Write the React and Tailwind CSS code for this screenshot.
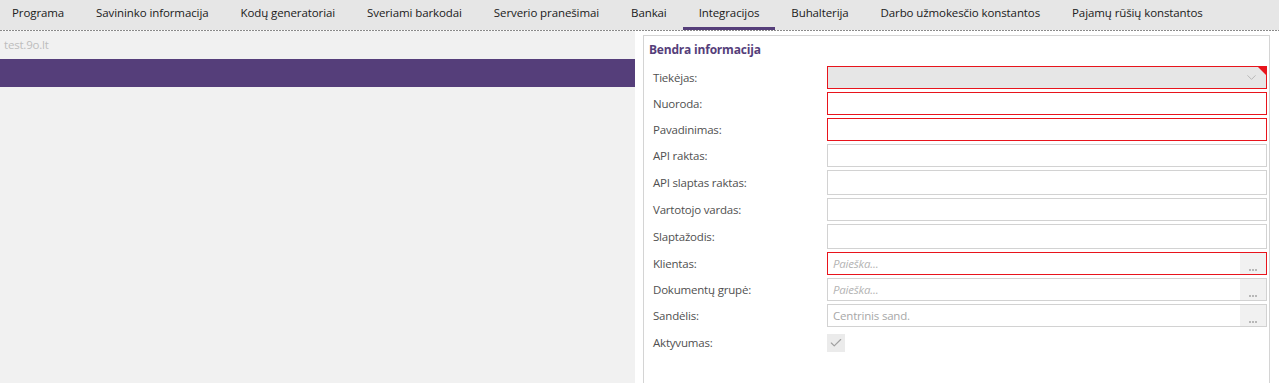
import { ChevronDown, Check } from 'lucide-react';

const tabs = [
    'Programa',
    'Savininko informacija',
    'Kodų generatoriai',
    'Sveriami barkodai',
    'Serverio pranešimai',
    'Bankai',
    'Integracijos',
    'Buhalterija',
    'Darbo užmokesčio konstantos',
    'Pajamų rūšių konstantos',
];

const TextField = ({ invalid, tall }) => (
    <div className={`w-full ${tall ? 'h-[25px]' : 'h-[23px]'} bg-white border ${invalid ? 'border-[#e8141c]' : 'border-[#d2d2d2]'}`} />
);

const LookupField = ({ invalid, placeholder, value }) => (
    <div className={`w-full h-[23px] flex bg-white border ${invalid ? 'border-[#e8141c]' : 'border-[#d2d2d2]'}`}>
        <div className="flex-1 flex items-center pl-[5px]">
            {value ? (
                <span className="text-[#a8a8a8]">{value}</span>
            ) : (
                <span className="italic text-[#b4b4b4]">{placeholder}</span>
            )}
        </div>
        <div className="w-[26px] bg-[#f1f1f1] flex items-end justify-center pb-[3px]">
            <span className="flex gap-[1px]">
                <i className="w-[2px] h-[2px] bg-[#b8b8b8]" />
                <i className="w-[2px] h-[2px] bg-[#b8b8b8]" />
                <i className="w-[2px] h-[2px] bg-[#b8b8b8]" />
            </span>
        </div>
    </div>
);

const Row = ({ label, children }) => (
    <div className="flex items-center">
        <div className="w-[174px] shrink-0 text-[#505050]">{label}</div>
        <div className="flex-1">{children}</div>
    </div>
);

const App = () => {
    return (
        <div className="min-h-screen flex flex-col bg-white font-['Open_Sans',sans-serif] text-[11.5px] tracking-[-0.2px] overflow-hidden">
            <div className="h-[30px] bg-[#e6e6e6] flex">
                <nav className="flex -ml-1 h-full tracking-[-0.1px]">
                    {tabs.map((t) => (
                        <div key={t} className="relative px-4 pb-[4px] flex items-center text-[#202020] whitespace-nowrap">
                            {t}
                            {t === 'Integracijos' && <span className="absolute left-0 right-0 bottom-0 h-[3px] bg-[#553e7a]" />}
                        </div>
                    ))}
                </nav>
            </div>
            <div className="h-px bg-[repeating-linear-gradient(to_right,#8a8a8a_0_2px,transparent_2px_3px)]" />
            <div className="flex flex-1">
                <aside className="w-[635px] shrink-0 bg-[#f1f1f1]">
                    <div className="h-[28px] flex items-center pl-1 text-[#bdbdbd]">test.9o.lt</div>
                    <div className="h-[28px] bg-[#553e7a]" />
                </aside>
                <main className="flex-1 pt-1 pl-2 pr-[9px] flex flex-col">
                    <div className="flex-1 border border-b-0 border-[#d4d4d4] pl-[9px] pr-[2px] pt-[5px]">
                        <h2 className="font-bold text-[12px] text-[#553e7a] -ml-1 mb-[7px]">Bendra informacija</h2>
                        <div className="flex flex-col gap-y-[3px]">
                            <Row label="Tiekėjas:">
                                <div className="relative w-full h-[23px] bg-[#e6e6e6] border border-[#e8141c] flex items-center justify-end pr-[7px]">
                                    <ChevronDown className="w-[15px] h-[15px] text-[#b4b4b4]" strokeWidth={1.5} />
                                    <span className="absolute top-0 right-0 w-0 h-0 border-t-[8px] border-l-[8px] border-t-[#e8141c] border-l-transparent" />
                                </div>
                            </Row>
                            <Row label="Nuoroda:"><TextField invalid /></Row>
                            <Row label="Pavadinimas:"><TextField invalid /></Row>
                            <Row label="API raktas:"><TextField /></Row>
                            <Row label="API slaptas raktas:"><TextField tall /></Row>
                            <Row label="Vartotojo vardas:"><TextField /></Row>
                            <Row label="Slaptažodis:"><TextField tall /></Row>
                            <Row label="Klientas:"><LookupField invalid placeholder="Paieška..." /></Row>
                            <Row label="Dokumentų grupė:"><LookupField placeholder="Paieška..." /></Row>
                            <Row label="Sandėlis:"><LookupField value="Centrinis sand." /></Row>
                            <div className="flex items-center mt-[4px]">
                                <div className="w-[174px] shrink-0 text-[#505050]">Aktyvumas:</div>
                                <div className="w-[18px] h-[18px] bg-[#ebebeb] flex items-center justify-center">
                                    <Check className="w-[14px] h-[14px] text-[#a0a0a0]" strokeWidth={2} />
                                </div>
                            </div>
                        </div>
                    </div>
                </main>
            </div>
        </div>
    );
};

export default App;
